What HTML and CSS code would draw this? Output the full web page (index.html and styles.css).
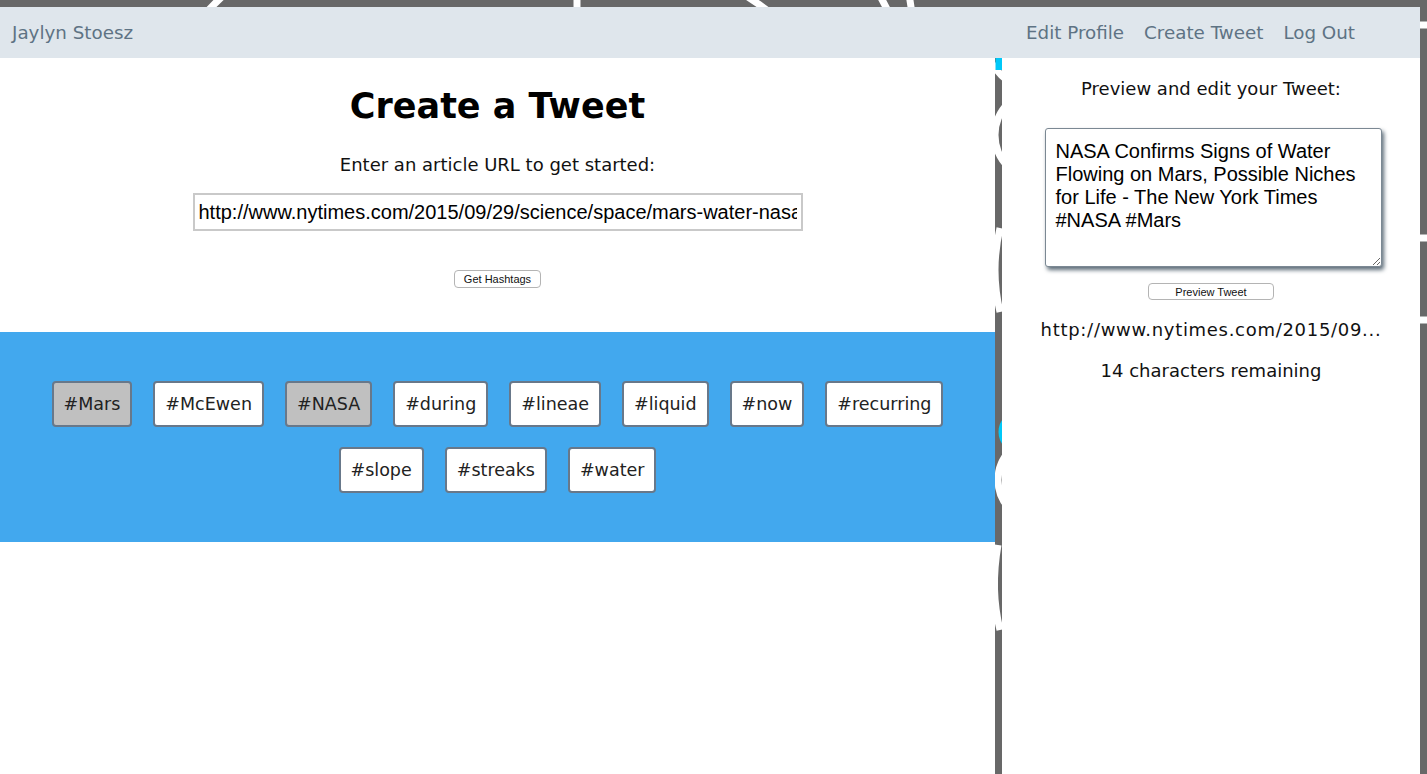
FILE: index.html
```html
<!DOCTYPE html>
<html lang="en">
<head>
<meta charset="utf-8">
<title>Create a Tweet</title>
<link rel="stylesheet" href="styles.css">
</head>
<body>
<svg class="bg-art" width="1427" height="774" viewBox="0 0 1427 774" aria-hidden="true">
  <g fill="none" stroke="#ffffff" stroke-width="7">
    <path d="M140 120 Q180 30 230 -10"/>
    <path d="M577 -20 L577 40"/>
    <path d="M700 -30 Q760 0 790 30"/>
    <path d="M870 -20 Q890 10 900 40"/>
    <path d="M905 -20 Q912 0 914 40"/>
    <path d="M1030 95 Q1000 80 990 60"/>
    <circle cx="1040" cy="135" r="45"/>
    <path d="M1000 228 Q990 270 1000 312"/>
    <circle cx="1040" cy="480" r="42"/>
    <path d="M998 545 Q990 590 1000 630"/>
    <path d="M1410 25 L1440 25"/>
    <path d="M1410 238 L1440 238"/>
    <path d="M1410 320 L1440 320"/>
  </g>
  <g fill="none" stroke="#00c8f8" stroke-width="7">
    <path d="M999 56 L999 70"/>
    <circle cx="1020" cy="432" r="18"/>
  </g>
</svg>
<div class="page">
  <nav class="topbar">
    <a class="brand" href="#">Jaylyn Stoesz</a>
    <div class="nav-links">
      <a href="#">Edit Profile</a>
      <a href="#">Create Tweet</a>
      <a href="#">Log Out</a>
    </div>
  </nav>
  <div class="columns">
    <main class="composer">
      <h1 class="title">Create a Tweet</h1>
      <p class="lead">Enter an article URL to get started:</p>
      <input class="url-input" type="text" value="http://www.nytimes.com/2015/09/29/science/space/mars-water-nasa.html">
      <div class="btn-row"><button class="small-btn">Get Hashtags</button></div>
      <section class="tags">
        <div class="tag-row">
          <span class="tag selected">#Mars</span>
          <span class="tag">#McEwen</span>
          <span class="tag selected">#NASA</span>
          <span class="tag">#during</span>
          <span class="tag">#lineae</span>
          <span class="tag">#liquid</span>
          <span class="tag">#now</span>
          <span class="tag">#recurring</span>
        </div>
        <div class="tag-row">
          <span class="tag">#slope</span>
          <span class="tag">#streaks</span>
          <span class="tag">#water</span>
        </div>
      </section>
    </main>
    <aside class="preview">
      <p class="preview-label">Preview and edit your Tweet:</p>
      <textarea class="tweet-box">NASA Confirms Signs of Water Flowing on Mars, Possible Niches for Life - The New York Times #NASA #Mars</textarea>
      <div class="btn-row"><button class="small-btn wide">Preview Tweet</button></div>
      <p class="preview-url">http://www.nytimes.com/2015/09...</p>
      <p class="remaining">14 characters remaining</p>
    </aside>
  </div>
</div>
</body>
</html>
```
FILE: styles.css
```css
html, body {
  margin: 0;
  padding: 0;
}
body {
  background: #686868;
  font-family: "DejaVu Sans", "Noto Sans", sans-serif;
  color: #111;
  width: 1427px;
  height: 774px;
  overflow: hidden;
  position: relative;
}
.bg-art {
  position: absolute;
  left: 0;
  top: 0;
  z-index: 0;
}
.page {
  position: relative;
  z-index: 1;
  width: 1420px;
  padding-top: 7px;
}
.topbar {
  height: 51px;
  background: #dfe6ec;
  display: flex;
  align-items: center;
  justify-content: space-between;
  padding: 0 65px 0 12px;
}
.topbar a {
  color: #5e7384;
  text-decoration: none;
  font-size: 18.3px;
}
.nav-links {
  display: flex;
  gap: 20px;
}
.columns {
  display: grid;
  grid-template-columns: 995px 418px;
  column-gap: 7px;
  height: 716px;
}
.composer {
  background: #fff;
  display: flex;
  flex-direction: column;
  align-items: center;
}
.title {
  margin: 27px 0 0;
  font-size: 35px;
  line-height: 42px;
  font-weight: bold;
  color: #000;
}
.lead {
  margin: 27px 0 0;
  font-size: 18px;
  line-height: 22px;
}
.url-input {
  margin-top: 17px;
  width: 610px;
  height: 38px;
  box-sizing: border-box;
  border: 2px solid #c9c9c9;
  padding: 0 4px;
  font-family: "Liberation Sans", Arial, sans-serif;
  font-size: 20px;
  color: #000;
  outline: none;
}
.btn-row {
  display: flex;
  justify-content: center;
}
.composer .btn-row {
  margin-top: 39px;
}
.small-btn {
  font-family: "Liberation Sans", Arial, sans-serif;
  font-size: 11px;
  height: 18px;
  padding: 0 9px;
  background: #fff;
  border: 1px solid #b4b4b4;
  border-radius: 4px;
  color: #111;
  line-height: 16px;
}
.small-btn.wide {
  width: 126px;
  height: 17px;
}
.tags {
  margin-top: 44px;
  align-self: stretch;
  background: #42a8ee;
  height: 210px;
  box-sizing: border-box;
  padding-top: 49px;
  display: flex;
  flex-direction: column;
  gap: 20px;
}
.tag-row {
  display: flex;
  justify-content: center;
  gap: 21px;
}
.tag {
  height: 46px;
  box-sizing: border-box;
  border: 2px solid #68788a;
  border-radius: 4px;
  background: #fff;
  padding: 0 10px;
  display: flex;
  align-items: center;
  font-size: 17.5px;
  color: #222;
}
.tag.selected {
  background: #c0c0c0;
}
.preview {
  background: #fff;
  display: flex;
  flex-direction: column;
  align-items: center;
}
.preview-label {
  margin: 20px 0 0;
  font-size: 18px;
  line-height: 22px;
}
.tweet-box {
  margin: 28px 0 0 4px;
  width: 337px;
  height: 139px;
  box-sizing: border-box;
  border: 1px solid #7b8893;
  border-radius: 3px;
  box-shadow: 2px 3px 4px #5d6c78;
  padding: 11px 10px;
  font-family: "Liberation Sans", Arial, sans-serif;
  font-size: 20px;
  line-height: 23px;
  color: #000;
  resize: vertical;
  outline: none;
}
.preview .btn-row {
  margin-top: 16px;
}
.preview-url {
  margin: 19px 0 0;
  font-size: 18px;
  line-height: 22px;
  letter-spacing: 0.7px;
}
.remaining {
  margin: 19px 0 0;
  font-size: 18px;
  line-height: 22px;
}
```
